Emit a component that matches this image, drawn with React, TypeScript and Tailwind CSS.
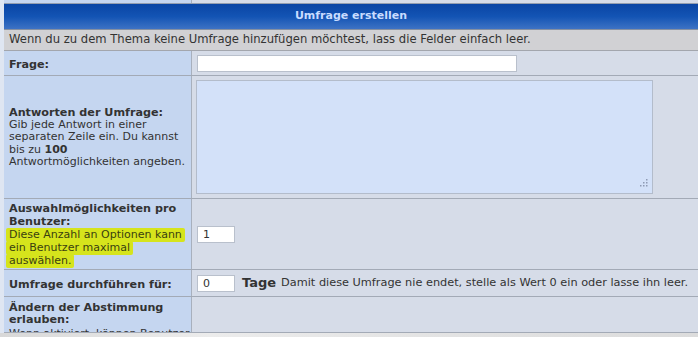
import React from "react";

const font = "font-['DejaVu_Sans','Verdana',sans-serif]";

function Row({
  left,
  right,
  h,
}: {
  left: React.ReactNode;
  right: React.ReactNode;
  h: string;
}) {
  return (
    <div className={`flex border-b border-[#a3aab6] ${h}`}>
      <div className="w-[188px] shrink-0 bg-[#c5d6f0] border-r border-[#a8b0bd] pl-[5px] pr-[1px] flex items-center text-[#333]">
        <div>{left}</div>
      </div>
      <div className="flex-1 bg-[#d6dce8] pl-[5px] flex items-center">{right}</div>
    </div>
  );
}

export default function App() {
  return (
    <div className={`${font} w-[698px] h-[337px] overflow-hidden bg-[#dfe6f2] relative`}>
      <div className="ml-[4px] flex flex-col">
        {/* previous row remnant */}
        <div className="flex h-[4px] border-b border-[#949eaf]">
          <div className="w-[188px] bg-[#c5d6f0] border-r border-[#a8b0bd]" />
          <div className="flex-1 bg-[#d6dce8]" />
        </div>
        {/* header */}
        <div className="h-[26px] bg-[linear-gradient(to_bottom,#0a45a4_0%,#1354b4_50%,#3d72c4_100%)] border-b border-[#8590a2] flex items-center">
          <div className="w-[888px] text-center text-[11px] font-bold text-[#c8dcff]">Umfrage erstellen</div>
        </div>
        {/* description */}
        <div className="h-[21px] bg-[#d1d1d4] border-b border-[#a3a6ad] pl-[5px] flex items-center text-[11.6px] text-[#333] whitespace-nowrap">
          Wenn du zu dem Thema keine Umfrage hinzufügen möchtest, lass die Felder einfach leer.
        </div>
        <Row
          h="h-[25px]"
          left={<span className="text-[11.2px] font-bold">Frage:</span>}
          right={<div className="w-[320px] h-[17px] bg-white border border-[#b9c0cc]" />}
        />
        <Row
          h="h-[123px]"
          left={
            <div>
              <div className="text-[11.2px] font-bold leading-[13px]">Antworten der Umfrage:</div>
              <div className="text-[11px] leading-[12.5px]">
                Gib jede Antwort in einer separaten Zeile ein. Du kannst bis zu <b>100</b> Antwortmöglichkeiten angeben.
              </div>
            </div>
          }
          right={
            <div className="relative -ml-[1px] w-[457px] h-[114px] bg-[#d3e1f9] border border-[#b3bccb]">
              <svg className="absolute right-[4px] bottom-[4px]" width="10" height="10" viewBox="0 0 10 10">
                <g fill="#8e9ab4">
                  <rect x="8" y="0" width="1.5" height="1.5" />
                  <rect x="5" y="3" width="1.5" height="1.5" />
                  <rect x="8" y="3" width="1.5" height="1.5" />
                  <rect x="2" y="6" width="1.5" height="1.5" />
                  <rect x="5" y="6" width="1.5" height="1.5" />
                  <rect x="8" y="6" width="1.5" height="1.5" />
                </g>
              </svg>
            </div>
          }
        />
        <Row
          h="h-[71px]"
          left={
            <div>
              <div className="text-[11.2px] font-bold leading-[13px]">Auswahlmöglichkeiten pro Benutzer:</div>
              <div className="text-[11px] leading-[13px] -ml-[3px] pr-[1px]">
                <span className="bg-[#d6e41c] text-[#3a3f10] px-[3px] pb-[1px] box-decoration-clone rounded-[2px]">
                  Diese Anzahl an Optionen kann ein Benutzer maximal auswählen.
                </span>
              </div>
            </div>
          }
          right={
            <div className="w-[38px] h-[17px] bg-white border border-[#b9c0cc] text-[11px] text-[#333] pl-[5px] leading-[15px]">1</div>
          }
        />
        <Row
          h="h-[27px]"
          left={<span className="text-[11.2px] font-bold">Umfrage durchführen für:</span>}
          right={
            <div className="flex items-center whitespace-nowrap">
              <div className="w-[38px] h-[17px] bg-white border border-[#b9c0cc] text-[11px] text-[#333] pl-[5px] leading-[15px]">0</div>
              <span className="ml-[7px] text-[13px] font-bold text-[#333]">Tage</span>
              <span className="ml-[5px] text-[11.3px] text-[#333]">
                Damit diese Umfrage nie endet, stelle als Wert 0 ein oder lasse ihn leer.
              </span>
            </div>
          }
        />
        <div className="flex h-[36px] border-b border-[#a3aab6]">
          <div className="w-[188px] shrink-0 bg-[#c5d6f0] border-r border-[#a8b0bd] pl-[5px] pt-[5px] text-[#333] overflow-hidden">
            <div className="text-[11.2px] font-bold leading-[12px]">Ändern der Abstimmung erlauben:</div>
            <div className="text-[11px] leading-[12px] pt-[2px]">Wenn aktiviert, können Benutzer</div>
          </div>
          <div className="flex-1 bg-[#d6dce8]" />
        </div>
      </div>
      <div className="absolute left-0 right-0 bottom-0 h-[4px] bg-[linear-gradient(to_right,#d8d8d8,#ececec_30%,#e4e4e4_60%,#dcdcdc)]" />
    </div>
  );
}
